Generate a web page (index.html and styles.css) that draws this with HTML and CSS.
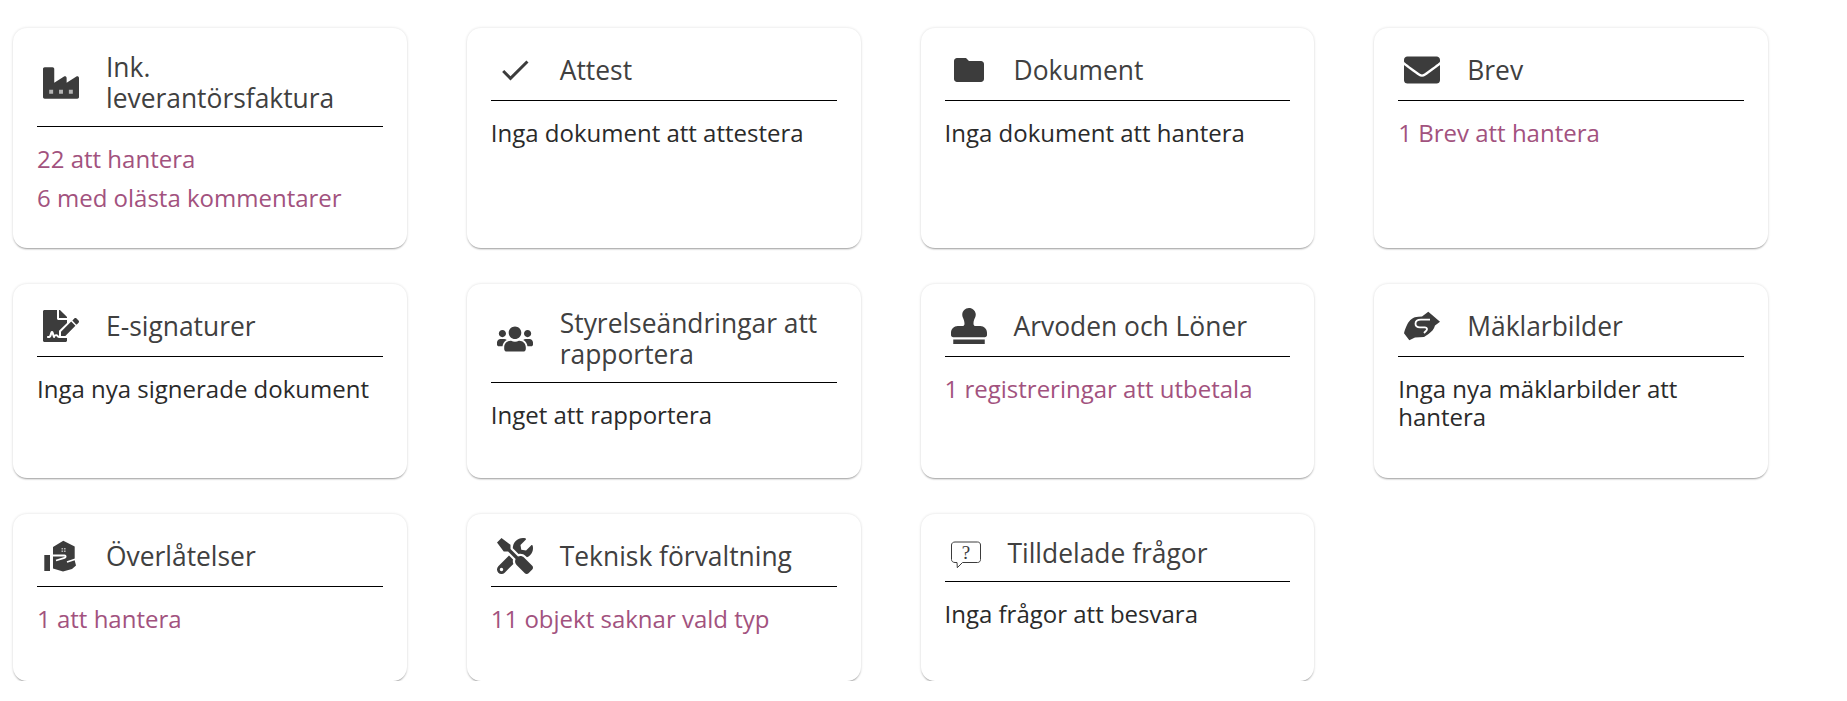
FILE: index.html
```html
<!DOCTYPE html>
<html lang="en">
<head>
    <meta charset="UTF-8">
    <meta name="viewport" content="width=device-width, initial-scale=1.0">
    <title>Översikt</title>
    <link rel="stylesheet" href="styles.css">
</head>
<body>
    <div class="card-grid">
        <div class="card">
            <div class="card-header">
                <svg class="card-icon" viewBox="0 0 512 512"><path d="M475.115 163.781L336 252.309v-68.28c0-18.916-20.931-30.399-36.885-20.248L160 252.309V56c0-13.255-10.745-24-24-24H24C10.745 32 0 42.745 0 56v400c0 13.255 10.745 24 24 24h464c13.255 0 24-10.745 24-24V184.029c0-18.917-20.931-30.399-36.885-20.248z"/><path class="icon-window" d="M88 352h56v56H88zM228 352h56v56h-56zM368 352h56v56h-56z"/></svg>
                <h3 class="card-title">Ink. leverantörsfaktura</h3>
            </div>
            <div class="card-body">
                <a class="card-link">22 att hantera</a>
                <a class="card-link">6 med olästa kommentarer</a>
            </div>
        </div>

        <div class="card">
            <div class="card-header">
                <svg class="card-icon" viewBox="0 0 24 24"><path d="M9 16.17L4.83 12l-1.41 1.41L9 19 21 7l-1.41-1.41z"/></svg>
                <h3 class="card-title">Attest</h3>
            </div>
            <div class="card-body">Inga dokument att attestera</div>
        </div>

        <div class="card">
            <div class="card-header">
                <svg class="card-icon" viewBox="0 0 24 24"><path d="M10 4H4c-1.1 0-2 .9-2 2v12c0 1.1.9 2 2 2h16c1.1 0 2-.9 2-2V8c0-1.1-.9-2-2-2h-8l-2-2z"/></svg>
                <h3 class="card-title">Dokument</h3>
            </div>
            <div class="card-body">Inga dokument att hantera</div>
        </div>

        <div class="card">
            <div class="card-header">
                <svg class="card-icon" viewBox="0 0 512 512"><path d="M502.3 190.8c3.9-3.1 9.7-.2 9.7 4.7V400c0 26.5-21.5 48-48 48H48c-26.5 0-48-21.5-48-48V195.6c0-5 5.7-7.8 9.7-4.7 22.4 17.4 52.1 39.5 154.1 113.6 21.1 15.4 56.7 47.8 92.2 47.6 35.7.3 72-32.8 92.3-47.6 102-74.1 131.6-96.3 154-113.7zM256 320c23.2.4 56.6-29.2 73.4-41.4 132.7-96.3 142.8-104.7 173.4-128.7 5.8-4.5 9.2-11.5 9.2-18.9v-19c0-26.5-21.5-48-48-48H48C21.5 64 0 85.5 0 112v19c0 7.4 3.4 14.3 9.2 18.9 30.6 23.9 40.7 32.4 173.4 128.7 16.8 12.2 50.2 41.8 73.4 41.4z"/></svg>
                <h3 class="card-title">Brev</h3>
            </div>
            <div class="card-body"><a class="card-link">1 Brev att hantera</a></div>
        </div>

        <div class="card">
            <div class="card-header">
                <svg class="card-icon" viewBox="0 0 576 512"><path d="M218.17 424.14c-2.95-5.92-8.09-6.52-10.17-6.52s-7.22.59-10.02 6.19l-7.67 15.34c-6.37 12.78-25.03 11.37-29.48-2.09L144 386.59l-10.61 31.88c-5.89 17.66-22.38 29.53-41 29.53H80c-8.84 0-16-7.16-16-16s7.16-16 16-16h12.39c4.83 0 9.11-3.08 10.64-7.66l18.19-54.64c3.3-9.81 12.44-16.41 22.78-16.41s19.48 6.59 22.77 16.41l13.88 41.64c19.75-16.19 54.06-9.7 66 14.16 1.89 3.78 5.49 5.95 9.36 6.26v-82.12l128-127.09V160H248c-13.2 0-24-10.8-24-24V0H24C10.7 0 0 10.7 0 24v464c0 13.3 10.7 24 24 24h336c13.3 0 24-10.7 24-24v-40l-128-.11c-16.12-.31-30.58-9.28-37.83-23.75zM384 121.9c0-6.3-2.5-12.4-7-16.9L279.1 7c-4.5-4.5-10.6-7-17-7H256v128h128v-6.1zm-96 225.06V416h68.99l161.68-162.78-67.88-67.88L288 346.96zm280.54-179.63l-31.87-31.87c-9.94-9.94-26.07-9.94-36.01 0l-27.25 27.25c-2.94 2.94-2.94 7.7 0 10.64l57.23 57.23c2.94 2.94 7.7 2.94 10.64 0l27.25-27.25c10.01-9.94 10.01-26.07.01-36z"/></svg>
                <h3 class="card-title">E-signaturer</h3>
            </div>
            <div class="card-body">Inga nya signerade dokument</div>
        </div>

        <div class="card">
            <div class="card-header">
                <svg class="card-icon" viewBox="0 0 640 512"><path d="M96 224c35.3 0 64-28.7 64-64s-28.7-64-64-64-64 28.7-64 64 28.7 64 64 64zm448 0c35.3 0 64-28.7 64-64s-28.7-64-64-64-64 28.7-64 64 28.7 64 64 64zm32 32h-64c-17.6 0-33.5 7.1-45.1 18.6 40.3 22.1 68.9 62 75.1 109.4h66c17.7 0 32-14.3 32-32v-32c0-35.3-28.7-64-64-64zm-256 0c61.9 0 112-50.1 112-112S381.9 32 320 32 208 82.1 208 144s50.1 112 112 112zm76.8 32h-8.3c-20.8 10-43.9 16-68.5 16s-47.6-6-68.5-16h-8.3C179.6 288 128 339.6 128 403.2V432c0 26.5 21.5 48 48 48h288c26.5 0 48-21.5 48-48v-28.8c0-63.6-51.6-115.2-115.2-115.2zm-223.7-13.4C161.5 263.1 145.6 256 128 256H64c-35.3 0-64 28.7-64 64v32c0 17.7 14.3 32 32 32h65.9c6.3-47.4 34.9-87.3 75.2-109.4z"/></svg>
                <h3 class="card-title">Styrelseändringar att rapportera</h3>
            </div>
            <div class="card-body">Inget att rapportera</div>
        </div>

        <div class="card">
            <div class="card-header">
                <svg class="card-icon" viewBox="0 0 512 512"><path d="M32 512h448v-64H32v64zm384-256h-66.56c-16.26 0-29.44-13.18-29.44-29.44v-9.46c0-27.37 8.88-53.41 21.46-77.72 9.11-17.61 12.9-38.39 9.05-60.42-6.77-38.78-38.47-70.7-77.26-77.45C212.62-9.04 160 37.33 160 96c0 14.16 3.12 27.54 8.69 39.58C182.02 164.43 192 194.7 192 226.49v.07c0 16.26-13.18 29.44-29.44 29.44H96c-53.02 0-96 42.98-96 96v32c0 17.67 14.33 32 32 32h448c17.67 0 32-14.33 32-32v-32c0-53.02-42.98-96-96-96z"/></svg>
                <h3 class="card-title">Arvoden och Löner</h3>
            </div>
            <div class="card-body"><a class="card-link">1 registreringar att utbetala</a></div>
        </div>

        <div class="card">
            <div class="card-header">
                <svg class="card-icon" viewBox="0 0 36 36"><path d="M0 25.300C1.500 19.500 4 13.500 7.700 11C9.500 9.500 12 8.700 14.300 8.700L18 8.500L24.300 3.700L36 13.700L31 17.500C30 21 28 23.500 24.500 26L20 29L11 29.500L5.300 32.300z"/><path class="icon-cut" d="M26 11.700H17C13.500 11.700 11.500 13.500 11.500 15.800C11.500 18 13.500 19.300 16 19.300H21C23 19.300 23.500 21 22.500 22.500L20 25"/></svg>
                <h3 class="card-title">Mäklarbilder</h3>
            </div>
            <div class="card-body">Inga nya mäklarbilder att hantera</div>
        </div>

        <div class="card">
            <div class="card-header">
                <svg class="card-icon" viewBox="0 0 36 36"><path d="M1.300 17H7V33H1.300z"/><path d="M20.300 2.700L31.700 8.500V22.500L33 27.500L29 31L20 33.500L10 30.500V9z"/><path class="icon-cut" d="M9.500 17.500H21.500C23 17.500 23 19.500 21.500 19.800L13 22.500M24 24L33 21"/><path class="icon-window" d="M18.500 10h1.600v1.600h-1.600zM21 10h1.600v1.600H21zM18.500 12.500h1.600v1.600h-1.600zM21 12.500h1.600v1.600H21z"/></svg>
                <h3 class="card-title">Överlåtelser</h3>
            </div>
            <div class="card-body"><a class="card-link">1 att hantera</a></div>
        </div>

        <div class="card">
            <div class="card-header">
                <svg class="card-icon" viewBox="0 0 512 512"><path d="M501.1 395.7L384 278.6c-23.1-23.1-57.6-27.6-85.4-13.9L192 158.1V96L64 0 0 64l96 128h62.1l106.6 106.6c-13.6 27.8-9.2 62.3 13.9 85.4l117.1 117.1c14.6 14.6 38.2 14.6 52.7 0l52.7-52.7c14.5-14.6 14.5-38.2 0-52.7zM331.7 225c28.3 0 54.9 11 74.9 31l19.4 19.4c15.8-6.9 30.8-16.5 43.8-29.5 37.1-37.1 49.7-89.3 37.9-136.7-2.2-9-13.5-12.1-20.1-5.5l-74.4 74.4-67.9-11.3L334 98.9l74.4-74.4c6.6-6.6 3.4-17.9-5.7-20.2-47.4-11.7-99.6.9-136.6 37.9-28.5 28.5-41.9 66.1-41.2 103.6l82.1 82.1c8.1-1.9 16.5-2.9 24.7-2.9zm-103.9 82l-56.7-56.7L18.7 402.8c-25 25-25 65.5 0 90.5s65.5 25 90.5 0l123.6-123.6c-7.6-19.9-9.9-41.6-5-62.7zM64 472c-13.2 0-24-10.8-24-24 0-13.3 10.7-24 24-24s24 10.7 24 24c0 13.2-10.7 24-24 24z"/></svg>
                <h3 class="card-title">Teknisk förvaltning</h3>
            </div>
            <div class="card-body"><a class="card-link">11 objekt saknar vald typ</a></div>
        </div>

        <div class="card">
            <div class="card-header">
                <svg class="card-icon card-icon-small" viewBox="0 0 30 30"><path class="icon-outline" d="M4 3H26.500C28.300 3 29.500 4.200 29.500 6V20.500C29.500 22.300 28.300 23.500 26.500 23.500H11.500L6.300 28.700L6 23.500H4C2 23.500 .5 22.300 .5 20.500V6C.5 4.200 2 3 4 3z"/><text class="icon-mark" x="15" y="20">?</text></svg>
                <h3 class="card-title">Tilldelade frågor</h3>
            </div>
            <div class="card-body">Inga frågor att besvara</div>
        </div>
    </div>
</body>
</html>
```

FILE: styles.css
```css
body {
    margin: 0;
    padding: 28px 0 0 13px;
    background-color: #fff;
    font-family: "Open Sans", sans-serif;
}

/* Card grid */
.card-grid {
    display: grid;
    width: 1755px;
    grid-template-columns: repeat(4, 1fr);
    grid-template-rows: 220px 194px 167px;
    gap: 36px 60px;
}

.card {
    padding: 24px 24px 0;
    background-color: #fff;
    border-radius: 14px;
    box-shadow: 0 2px 2px -1px rgba(0, 0, 0, 0.35), 0 0 3px rgba(0, 0, 0, 0.14);
}

.card-header {
    display: flex;
    align-items: center;
    padding-bottom: 12px;
    border-bottom: 1px solid #000;
}

.card-icon {
    flex: none;
    width: 36px;
    height: 36px;
    margin: 0 6px;
    fill: #3c3c3c;
}

.card-icon-small {
    width: 30px;
    height: 30px;
}

.card-title {
    margin: 0 0 0 21px;
    color: #404040;
    font-size: 26.4px;
    font-weight: 400;
    line-height: 31px;
}

.card-body {
    padding-top: 18px;
    color: #2a2a2a;
    font-size: 24px;
    line-height: 28px;
}

.card-link {
    display: block;
    margin-bottom: 11px;
    color: #a2527e;
    cursor: pointer;
}

/* Icon details */
.icon-window {
    fill: #b4b4b4;
}

.icon-cut {
    fill: none;
    stroke: #fff;
    stroke-width: 1.8;
}

.icon-outline {
    fill: none;
    stroke: #3c3c3c;
    stroke-width: 1;
}

.icon-mark {
    fill: #3c3c3c;
    font-family: "Liberation Serif", serif;
    font-size: 19px;
    text-anchor: middle;
}
```
